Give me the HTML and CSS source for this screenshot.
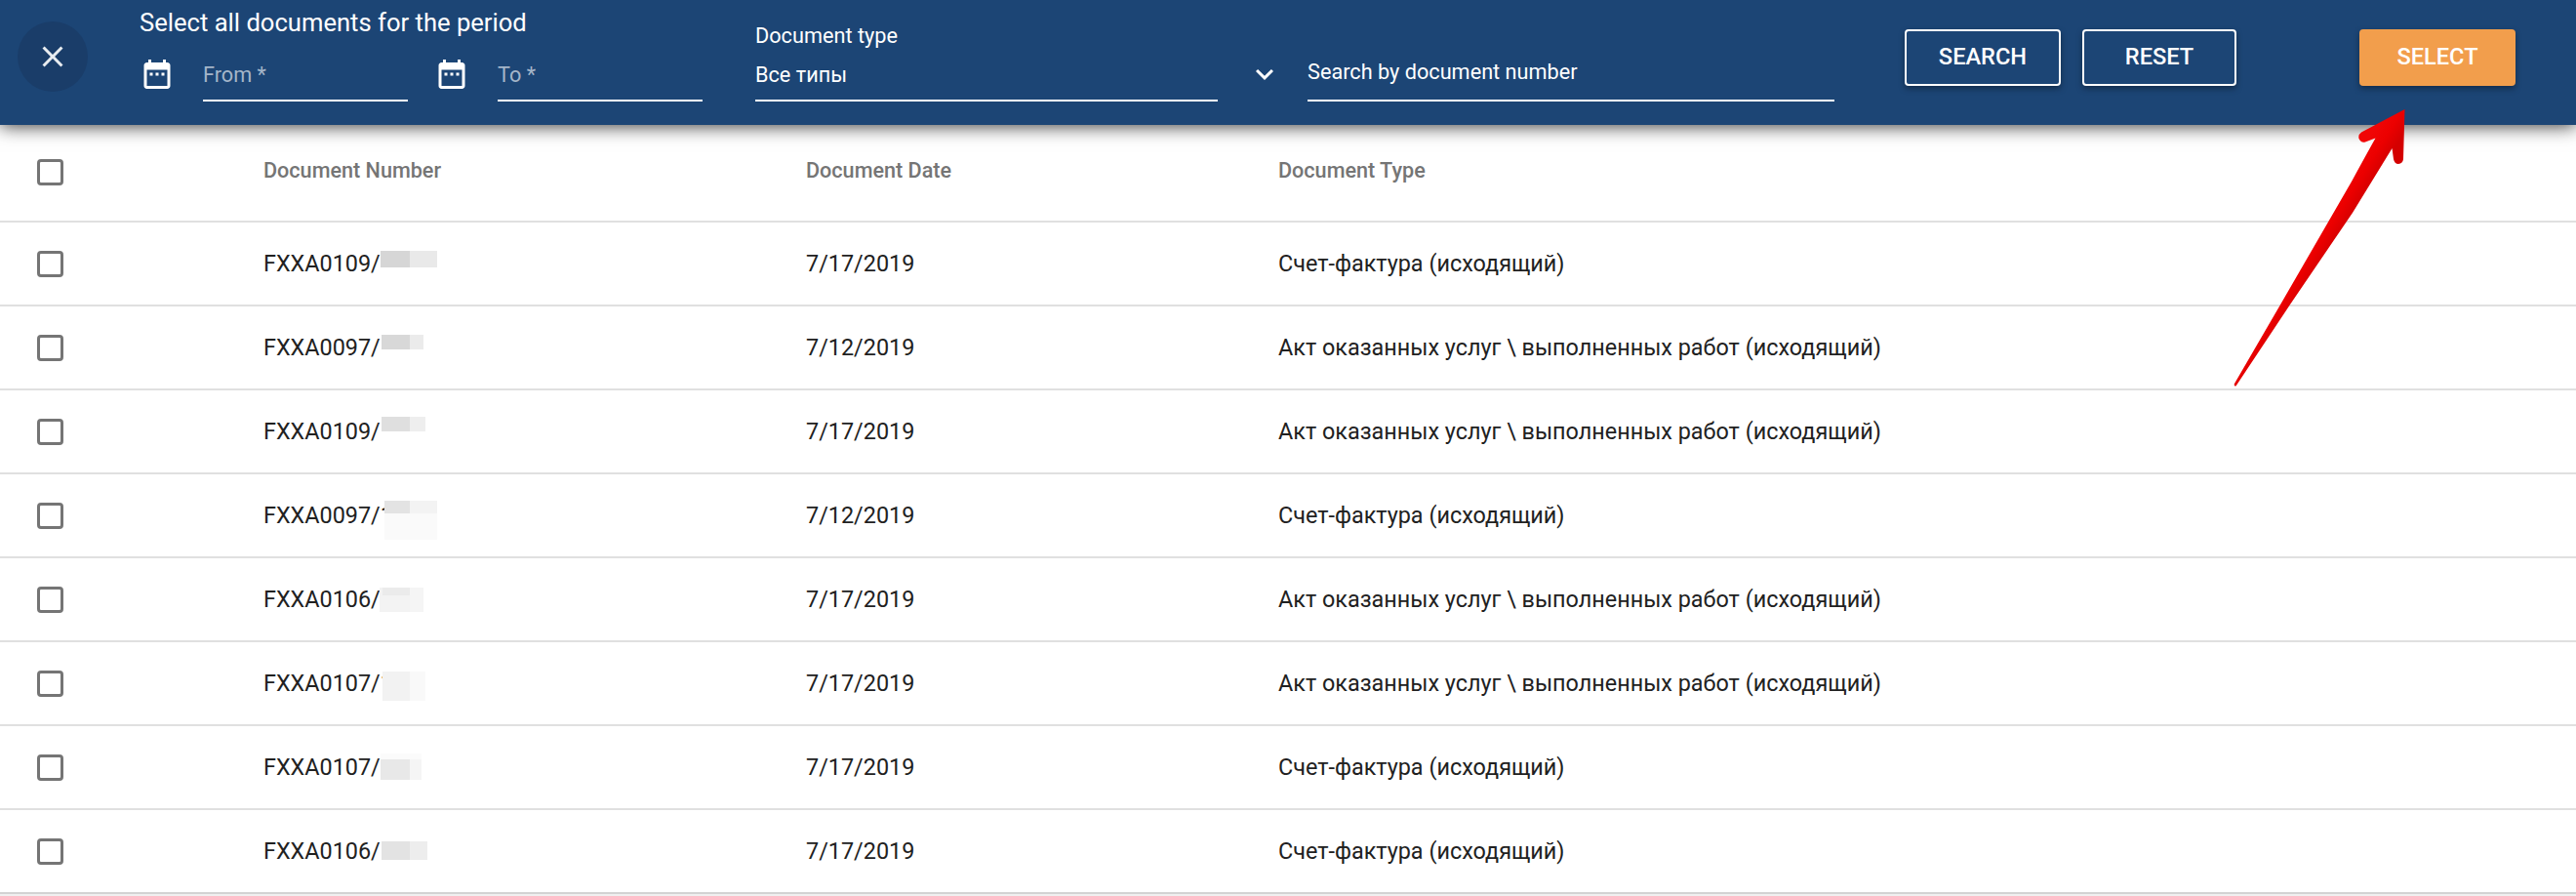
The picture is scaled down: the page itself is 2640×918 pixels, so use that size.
FILE: index.html
```html
<!DOCTYPE html>
<html lang="en">
<head>
<meta charset="utf-8">
<title>Select documents</title>
<link rel="stylesheet" href="styles.css">
</head>
<body>
<svg class="sprite" aria-hidden="true">
  <symbol id="close" viewBox="0 0 24 24"><path d="M19 6.41L17.59 5 12 10.59 6.41 5 5 6.41 10.59 12 5 17.59 6.41 19 12 13.41 17.59 19 19 17.59 13.41 12z"/></symbol>
  <symbol id="calendar" viewBox="0 0 24 24"><path d="M9 11H7v2h2v-2zm4 0h-2v2h2v-2zm4 0h-2v2h2v-2zm2-7h-1V2h-2v2H8V2H6v2H5c-1.11 0-1.99.9-1.99 2L3 20c0 1.1.89 2 2 2h14c1.1 0 2-.9 2-2V6c0-1.1-.9-2-2-2zm0 16H5V9h14v11z"/></symbol>
  <symbol id="expand" viewBox="0 0 24 24"><path d="M16.59 8.59L12 13.17 7.41 8.59 6 10l6 6 6-6z"/></symbol>
</svg>

<header class="toolbar">
  <button class="close"><svg class="icon"><use href="#close"/></svg></button>
  <section class="period">
    <h1 class="period-title">Select all documents for the period</h1>
    <div class="dates">
      <svg class="icon"><use href="#calendar"/></svg>
      <label class="field date hint">From *</label>
      <svg class="icon second"><use href="#calendar"/></svg>
      <label class="field date hint">To *</label>
    </div>
  </section>
  <section class="type">
    <div class="type-label">Document type</div>
    <div class="field">Все типы</div>
  </section>
  <svg class="icon expand"><use href="#expand"/></svg>
  <label class="field search">Search by document number</label>
  <div class="actions">
    <button class="btn">SEARCH</button>
    <button class="btn reset">RESET</button>
    <button class="btn primary">SELECT</button>
  </div>
</header>

<main class="table">
  <div class="row head"><i class="check"></i><div>Document Number</div><div>Document Date</div><div>Document Type</div></div>
  <div class="row"><i class="check"></i><div class="num">FXXA0109/<svg class="mask"><path fill="#d6d6d6" d="M4 29h30v17H4z"/><path fill="#e9e9e9" d="M34 29h28v17H34z"/></svg></div><div>7/17/2019</div><div>Счет-фактура (исходящий)</div></div>
  <div class="row"><i class="check"></i><div class="num">FXXA0097/<svg class="mask"><path fill="#d8d8d8" d="M5 29h29v15H5z"/><path fill="#ebebeb" d="M34 29h14v15H34z"/></svg></div><div>7/12/2019</div><div>Акт оказанных услуг \ выполненных работ (исходящий)</div></div>
  <div class="row"><i class="check"></i><div class="num">FXXA0109/<svg class="mask"><path fill="#dfdfdf" d="M5 27h29v15H5z"/><path fill="#eee" d="M34 27h16v15H34z"/></svg></div><div>7/17/2019</div><div>Акт оказанных услуг \ выполненных работ (исходящий)</div></div>
  <div class="row"><i class="check"></i><div class="num">FXXA0097/1<svg class="mask"><path fill="#fafafa" d="M8 27h54v40H8z"/><path fill="#e3e3e3" d="M8 27h26v13H8z"/><path fill="#f3f3f3" d="M34 27h28v13H34z"/></svg></div><div>7/12/2019</div><div>Счет-фактура (исходящий)</div></div>
  <div class="row"><i class="check"></i><div class="num">FXXA0106/<svg class="mask"><path fill="#f3f3f3" d="M3 30h31v25H3z"/><path fill="#ebebeb" d="M6 30h28v8H6z"/><path fill="#f5f5f5" d="M34 30h14v25H34z"/></svg></div><div>7/17/2019</div><div>Акт оказанных услуг \ выполненных работ (исходящий)</div></div>
  <div class="row"><i class="check"></i><div class="num">FXXA0107/1<svg class="mask"><path fill="#f2f2f2" d="M6 30h28v30H6z"/><path fill="#f9f9f9" d="M34 30h16v30H34z"/></svg></div><div>7/17/2019</div><div>Акт оказанных услуг \ выполненных работ (исходящий)</div></div>
  <div class="row"><i class="check"></i><div class="num">FXXA0107/<svg class="mask"><path fill="#fbfbfb" d="M4 28h42v6H4z"/><path fill="#e8e8e8" d="M4 34h30v21H4z"/><path fill="#f5f5f5" d="M34 34h12v21H34z"/></svg></div><div>7/17/2019</div><div>Счет-фактура (исходящий)</div></div>
  <div class="row"><i class="check"></i><div class="num">FXXA0106/<svg class="mask"><path fill="#e3e3e3" d="M5 32h29v19H5z"/><path fill="#ededed" d="M34 32h18v19H34z"/></svg></div><div>7/17/2019</div><div>Счет-фактура (исходящий)</div></div>
</main>

<svg class="arrow" viewBox="0 0 260 320">
  <defs><linearGradient id="red" gradientUnits="userSpaceOnUse" x1="176" y1="38" x2="200" y2="53"><stop offset="0" stop-color="#f00505"/><stop offset=".5" stop-color="#ec0000"/><stop offset="1" stop-color="#d40000"/></linearGradient></defs>
  <path fill="url(#red)" d="M204.500 22L160 45.500Q156.500 48 157.500 52Q159.500 56.500 164 55.500L174.500 51.500Q163 72 150 96L80 217L30 303Q29 306 31.500 305.500L87 222L151 128L191.500 62L193 73Q194 78 198 78Q202.500 77.500 203 73Z"/>
</svg>
</body>
</html>
```
FILE: styles.css
```css
* { box-sizing: border-box; }
body { margin: 0; width: 2640px; height: 918px; overflow: hidden; position: relative; background: #f0f0f0; font-family: Roboto, sans-serif; color: #212121; }
button { font: inherit; padding: 0; border: 0; }
.sprite { position: absolute; width: 0; height: 0; }
.icon { width: 36px; height: 36px; flex: none; fill: #fff; display: block; }

.toolbar { position: relative; z-index: 1; height: 128px; display: flex; align-items: flex-start; background: #1c4575; color: #fff; box-shadow: 0 1px 18px rgba(0, 0, 0, .8); }
.close { width: 72px; height: 72px; margin: 22px 53px 0 18px; border-radius: 50%; background: #1a3d69; display: flex; align-items: center; justify-content: center; }
.close .icon { fill: #e8ecf0; margin-right: 1px; }
.period { width: 577px; margin-right: 54px; }
.period-title { margin: 9px 0 0; font-size: 25.6px; line-height: 28px; font-weight: 400; height: 49px; }
.dates { display: flex; height: 46px; }
.field { display: block; border-bottom: 2px solid #fff; font-size: 21.7px; line-height: 38px; height: 46px; }
.date { width: 210px; margin-left: 29px; }
.second { margin-left: 27px; }
.hint { color: #a4b5c9; }
.type { width: 474px; }
.type-label { margin-top: 23px; height: 35px; font-size: 21.7px; line-height: 28px; }
.expand { margin: 58px 26px 0 30px; }
.search { width: 540px; margin-top: 55px; height: 49px; }
.actions { display: flex; margin: 30px 0 0 72px; }
.btn { width: 160px; height: 58px; padding-bottom: 2px; border: 2px solid #fff; border-radius: 4px; background: #1c4575; color: #fff; font-size: 23.6px; font-weight: 500; line-height: 52px; box-shadow: 0 3px 6px rgba(0, 0, 0, .35); }
.reset { width: 158px; margin: 0 126px 0 22px; }
.primary { border-color: #f29e4c; background: #f29e4c; }

.table { background: #fff; }
.row { display: grid; grid-template-columns: 232px 556px 484px 1fr; height: 86px; padding-left: 38px; align-items: center; border-bottom: 2px solid #e0e0e0; font-size: 23.4px; line-height: 28px; }
.row:last-child { border-color: #d3d3d3; }
.head { height: 100px; padding-bottom: 2px; font-size: 21.6px; font-weight: 500; line-height: 26px; color: #757575; }
.head div { padding-bottom: 2px; }
.check { width: 27px; height: 27px; border: 3px solid #757575; border-radius: 4px; }
.num { position: relative; }
.mask { position: absolute; left: 116px; top: -28px; width: 66px; height: 84px; }
.arrow { position: absolute; z-index: 2; left: 2260px; top: 90px; width: 260px; height: 320px; }
```
